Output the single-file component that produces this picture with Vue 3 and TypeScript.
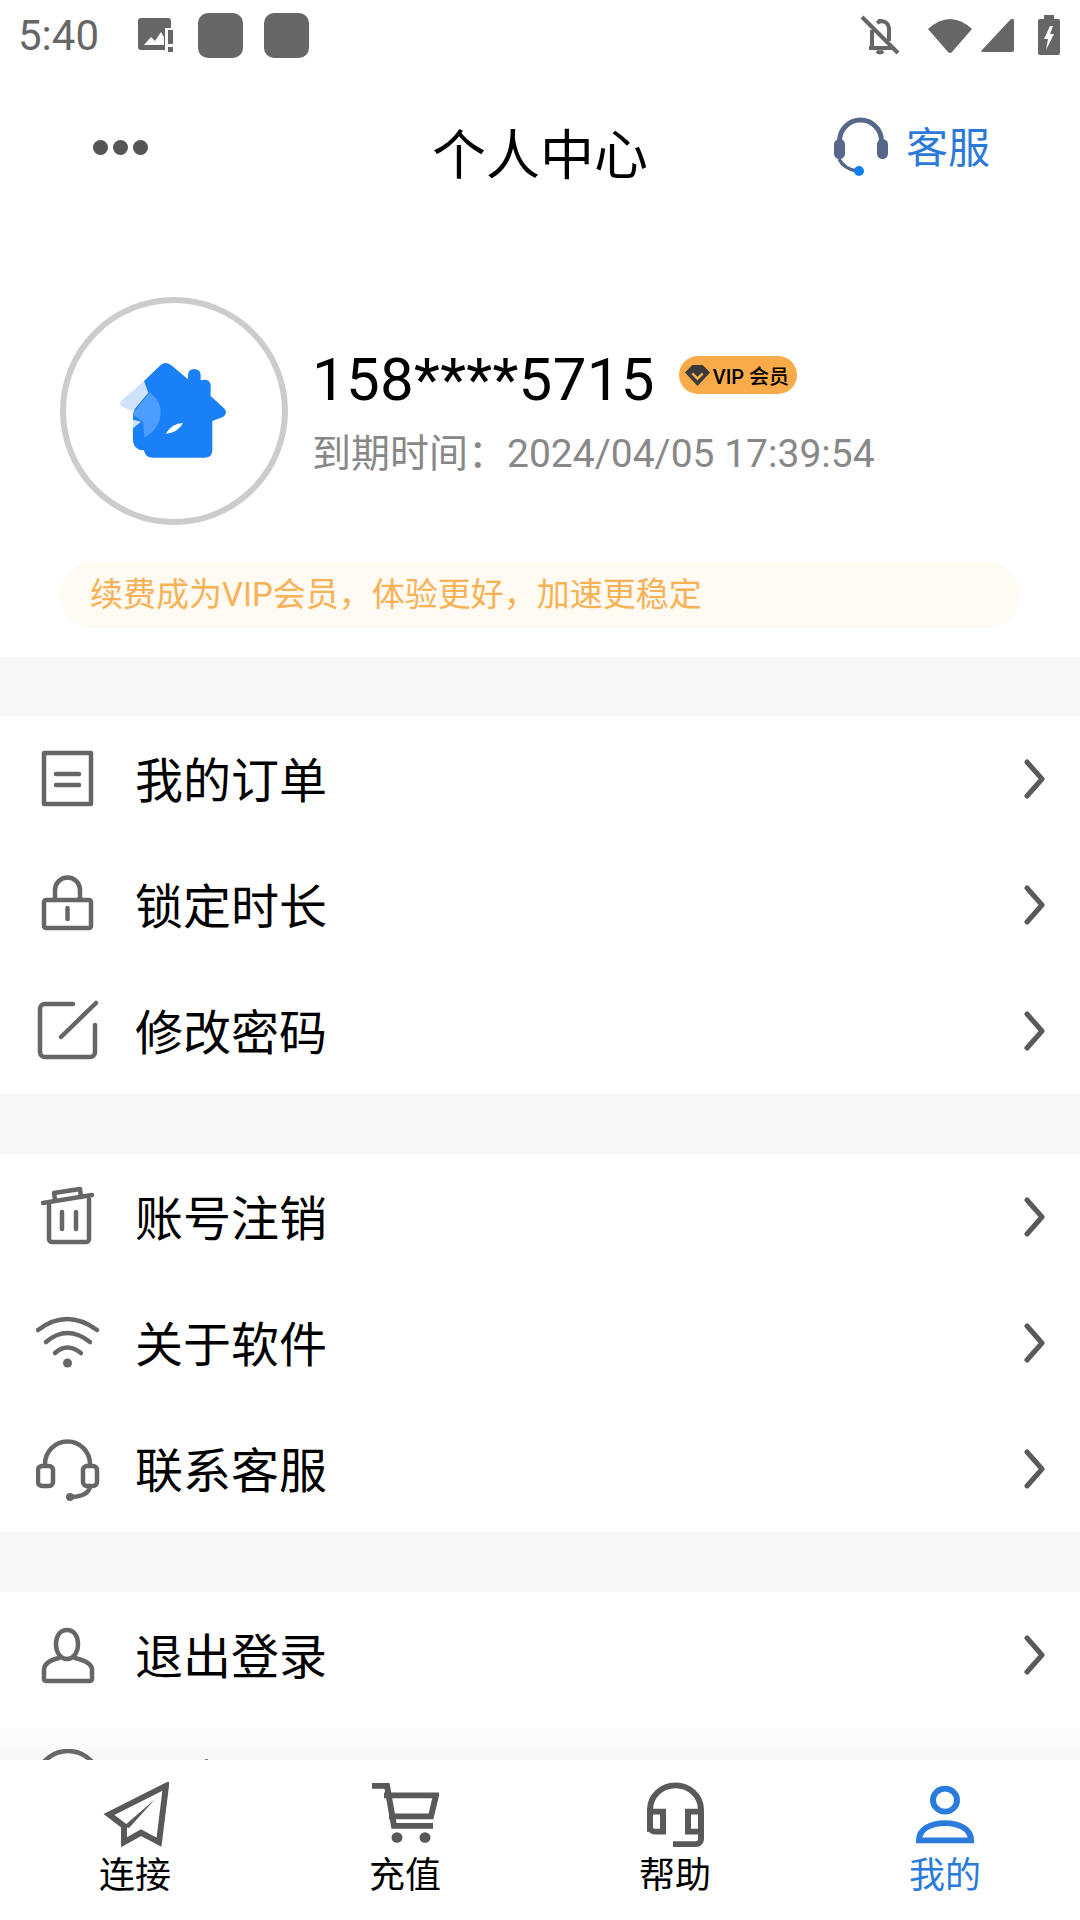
<script setup lang="ts">
interface MenuItem {
  label: string
  paths: string[]
  dot?: [number, number, number]
}

interface TabItem {
  label: string
  active?: boolean
}

const groups: MenuItem[][] = [
  [
    {
      label: '我的订单',
      paths: ['M8 6H55V57H8Z', 'M20 27H43', 'M20 38H43'],
    },
    {
      label: '锁定时长',
      paths: ['M10 27H53a2 2 0 0 1 2 2V53a2 2 0 0 1-2 2H10a2 2 0 0 1-2-2V29a2 2 0 0 1 2-2Z', 'M19 27V17a12.5 12.5 0 0 1 25 0V27', 'M31.5 35V46'],
    },
    {
      label: '修改密码',
      paths: ['M37 5H9a5 5 0 0 0-5 5V53a5 5 0 0 0 5 5H54a5 5 0 0 0 5-5V26', 'M60 4L25 38'],
    },
  ],
  [
    {
      label: '账号注销',
      paths: ['M7 18L56 10', 'M19 15L18 8L44 4L45 12', 'M13 20V54a3 3 0 0 0 3 3H50a3 3 0 0 0 3-3V14', 'M26 27V44', 'M40 27V44'],
    },
    {
      label: '关于软件',
      paths: ['M2 19Q31 -3 61 19', 'M10 31Q31 13 54 31', 'M19 42Q31 31 45 42'],
      dot: [31.5, 52, 4.5],
    },
    {
      label: '联系客服',
      paths: ['M9 27A22.5 22.5 0 0 1 54 27', 'M6 29H13a4 4 0 0 1 4 4V45a4 4 0 0 1-4 4H6a4 4 0 0 1-4-4V33a4 4 0 0 1 4-4Z', 'M51 29H57a4 4 0 0 1 4 4V45a4 4 0 0 1-4 4H51a4 4 0 0 1-4-4V33a4 4 0 0 1 4-4Z', 'M54 50Q52 59 36 60'],
      dot: [34, 60, 4],
    },
  ],
  [
    {
      label: '退出登录',
      paths: ['M31 7C24 7 20 13 20 21C20 30 25 36 31 36C37 36 42 30 42 21C42 13 38 7 31 7Z', 'M23 35C14 37 8 40 8 47V56a2 2 0 0 0 2 2H54a2 2 0 0 0 2-2V47C56 40 48 37 39 35'],
    },
  ],
]

const tabs: TabItem[] = [
  { label: '连接' },
  { label: '充值' },
  { label: '帮助' },
  { label: '我的', active: true },
]
</script>

<template>
  <div class="page">
    <div class="status-bar">
      <span class="clock">5:40</span>
      <svg class="st-photo" width="36" height="36" viewBox="0 0 36 36">
        <path d="M3 1H30a3 3 0 0 1 3 3V11H27V33H3a3 3 0 0 1-3-3V4a3 3 0 0 1 3-3Z" fill="#666" />
        <path d="M6 28L13 20L17 24L23 15L26 20V28Z" fill="#fff" />
        <path d="M30 13H35V27H30ZM30 30H35V35H30Z" fill="#666" />
      </svg>
      <span class="st-square"></span>
      <span class="st-square"></span>
      <span class="st-gap"></span>
      <svg width="40" height="40" viewBox="0 0 40 40" fill="none" stroke="#666" stroke-width="4">
        <path d="M2 2L38 38" />
        <path d="M9 33H34M12 32V15M17 8Q21 5 25 7Q29 9 29 15V26" />
        <path d="M20 4V7M17 36Q20 39 23 36" />
      </svg>
      <svg class="st-wifi" width="46" height="38" viewBox="0 0 46 38">
        <path d="M1 13Q23 -7 45 13L25 36Q23 38 21 36Z" fill="#666" />
      </svg>
      <svg class="st-signal" width="34" height="34" viewBox="0 0 34 34">
        <path d="M34 3V32a2 2 0 0 1-2 2H3Q0 34 2 32L30 2Q34 -1 34 3Z" fill="#666" />
      </svg>
      <svg class="st-battery" width="22" height="40" viewBox="0 0 22 40">
        <path d="M6 0H16V4H20a2 2 0 0 1 2 2V38a2 2 0 0 1-2 2H2a2 2 0 0 1-2-2V6a2 2 0 0 1 2-2H6Z" fill="#666" />
        <path d="M12 11L6 24H10L8 35L16 19H12L15 11Z" fill="#fff" />
      </svg>
    </div>

    <header class="top-bar">
      <div class="more">
        <i></i><i></i><i></i>
      </div>
      <h1 class="title">个人中心</h1>
      <div class="service">
        <svg width="60" height="60" viewBox="0 0 60 60" fill="none">
          <path d="M9.5 24a21 21 0 0 1 42 0" stroke="#566789" stroke-width="5" />
          <rect x="4" y="22" width="11" height="20" rx="5.5" fill="#566789" />
          <rect x="47" y="22" width="11" height="20" rx="5.5" fill="#566789" />
          <path d="M9 42Q14 52 27 54" stroke="#566789" stroke-width="3.5" />
          <circle cx="29" cy="54" r="5" fill="#0d7ff2" />
        </svg>
        <span class="service-text">客服</span>
      </div>
    </header>

    <section class="profile">
      <div class="user">
        <div class="avatar">
          <svg width="130" height="120" viewBox="0 0 390 360">
            <path d="M105 90L155 42Q170 30 186 42L237 85V72Q238 54 256 54Q276 56 275 74V88Q302 82 305 102V135L345 172Q358 186 342 198L310 210V298Q310 320 288 320H130Q108 320 105 298Q78 298 72 272V190Z" fill="#1a80f5" />
            <path d="M105 90L118 125L72 180L40 168Q26 156 40 146Z" fill="#cfe2fb" />
            <path d="M72 206L96 212L72 232Z" fill="#cfe2fb" />
            <path d="M122 124Q158 150 155 190Q150 236 106 260L102 212L70 190Z" fill="#4c9dff" />
            <path d="M170 248Q190 216 222 216Q206 246 170 248Z" fill="#fff" />
          </svg>
        </div>
        <div class="user-info">
          <div class="phone-line">
            <span class="phone">158****5715</span>
            <span class="vip-badge">
              <svg width="25" height="25" viewBox="0 0 24 24">
                <path d="M7 2H17L24 9L12 22L0 9Z" fill="#3a3a3a" />
                <path d="M7 10L12 15L17 10" fill="none" stroke="#f9ab4a" stroke-width="2.5" />
              </svg>
              <span>VIP 会员</span>
            </span>
          </div>
          <div class="expire">到期时间：2024/04/05 17:39:54</div>
        </div>
      </div>
      <div class="promo">续费成为VIP会员，体验更好，加速更稳定</div>
    </section>

    <main class="scroller">
      <div v-for="(group, i) in groups" :key="i" class="group">
        <div v-for="item in group" :key="item.label" class="row">
          <svg class="row-icon" width="64" height="64" viewBox="0 0 64 64" fill="none" stroke="#666" stroke-width="4.5" stroke-linecap="round" stroke-linejoin="round">
            <path v-for="d in item.paths" :key="d" :d="d" />
            <circle v-if="item.dot" :cx="item.dot[0]" :cy="item.dot[1]" :r="item.dot[2]" fill="#666" stroke="none" />
          </svg>
          <span class="row-label">{{ item.label }}</span>
          <svg class="chevron" width="24" height="40" viewBox="0 0 24 40" fill="none" stroke="#5a5a5a" stroke-width="5" stroke-linecap="round" stroke-linejoin="round">
            <path d="M5 3L20 20L5 37" />
          </svg>
        </div>
      </div>
      <div class="row row-fade">
        <svg class="row-icon" width="64" height="64" viewBox="0 0 64 64" fill="none" stroke="#666" stroke-width="4.5">
          <circle cx="32" cy="34" r="32" />
        </svg>
        <span class="row-label">分享</span>
      </div>
    </main>

    <nav class="tab-bar">
      <div v-for="(tab, i) in tabs" :key="tab.label" class="tab" :class="{ active: tab.active }">
        <svg width="68" height="65" viewBox="0 0 68 68" preserveAspectRatio="none" fill="none" stroke="#595959" stroke-width="6">
          <template v-if="i === 0">
            <path d="M65 4L8 34L23 46V63L40 53L58 63Z" stroke-width="6" />
            <path d="M23 46L54 18L28 48Z" fill="#595959" stroke="none" />
          </template>
          <template v-else-if="i === 1">
            <path d="M1 4H16L23 46H62" />
            <path d="M13 14H65L60 36H18" />
            <circle cx="26" cy="58" r="5.5" fill="#595959" stroke="none" />
            <circle cx="54" cy="58" r="5.5" fill="#595959" stroke="none" />
          </template>
          <template v-else-if="i === 2">
            <path d="M9 52V29a25.5 25.5 0 0 1 51 0V60a5 5 0 0 1-5 5H32" />
            <path d="M9 31H22V52H14a5 5 0 0 1-5-5" />
            <path d="M60 31H47V52H60" />
          </template>
          <template v-else>
            <circle cx="34" cy="19" r="12" stroke="#2a7bdc" />
            <path d="M8 61C8 49 20 43 34 43C48 43 60 49 60 61Z" stroke="#2a7bdc" />
          </template>
        </svg>
        <span class="tab-label">{{ tab.label }}</span>
      </div>
    </nav>
  </div>
</template>

<style>
html,
body {
  margin: 0;
  background: #fff;
}
</style>

<style scoped>
.page {
  display: flex;
  flex-direction: column;
  width: 1080px;
  height: 1920px;
  overflow: hidden;
  background: #fff;
  color: #000;
  font-family: Roboto, "Noto Sans CJK SC", sans-serif;
}

.status-bar {
  display: flex;
  align-items: center;
  flex: none;
  height: 70px;
  padding: 0 20px 0 18px;
  box-sizing: border-box;
}

.clock {
  width: 120px;
  font-size: 42px;
  color: #666;
}

.st-photo {
  margin-right: 24px;
}

.st-square {
  width: 45px;
  height: 45px;
  margin-right: 21px;
  border-radius: 10px;
  background: #666;
}

.st-gap {
  flex: 1;
}

.st-wifi {
  margin-left: 27px;
}

.st-signal {
  margin-left: 7px;
}

.st-battery {
  margin-left: 24px;
}

.top-bar {
  display: flex;
  align-items: center;
  justify-content: space-between;
  position: relative;
  flex: none;
  height: 154px;
  padding: 0 90px 0 93px;
}

.more {
  display: flex;
  gap: 5px;
}

.more i {
  width: 15px;
  height: 15px;
  border-radius: 50%;
  background: #555;
}

.title {
  position: absolute;
  left: 0;
  right: 0;
  top: 52px;
  margin: 0;
  text-align: center;
  font-size: 54px;
  font-weight: 400;
  line-height: 70px;
}

.service {
  display: flex;
  align-items: center;
  gap: 16px;
  color: #2b7ad9;
  font-size: 42px;
}

.service-text {
  margin-bottom: 5px;
}

.profile {
  flex: none;
  padding: 73px 60px 29px;
}

.user {
  display: flex;
  align-items: center;
  gap: 24px;
}

.avatar {
  display: flex;
  align-items: center;
  justify-content: center;
  width: 228px;
  height: 228px;
  box-sizing: border-box;
  border: 6px solid #ccc;
  border-radius: 50%;
}

.user-info {
  display: flex;
  flex-direction: column;
  gap: 16px;
}

.phone-line {
  display: flex;
  align-items: center;
  gap: 24px;
}

.phone {
  font-size: 60px;
  line-height: 70px;
  letter-spacing: 0.3px;
}

.vip-badge {
  display: flex;
  align-items: center;
  gap: 3px;
  height: 38px;
  padding: 0 8px 0 6px;
  margin-bottom: 10px;
  border-radius: 19px;
  background: #f9ab4a;
  font-size: 20px;
  font-weight: 500;
}

.expire {
  font-size: 39px;
  line-height: 46px;
  color: #888;
}

.promo {
  height: 66px;
  margin-top: 37px;
  padding-left: 30px;
  border-radius: 33px;
  background: #fffaf2;
  color: #f9b155;
  font-size: 33px;
  line-height: 66px;
}

.scroller {
  flex: 1;
  min-height: 0;
  overflow: hidden;
  display: flex;
  flex-direction: column;
}

.group {
  flex: none;
  padding-top: 59px;
  background: #f7f7f7;
}

.group + .group {
  padding-top: 60px;
}

.row {
  display: flex;
  align-items: center;
  flex: none;
  height: 126px;
  padding: 0 36px;
  background: #fff;
}

.row-fade {
  background: linear-gradient(#fff 5px, #f7f7f7 41px);
}

.row-label {
  margin-left: 35px;
  margin-bottom: 4px;
  font-size: 48px;
}

.chevron {
  margin-left: auto;
  margin-right: -2px;
}

.tab-bar {
  display: grid;
  grid-template-columns: repeat(4, 1fr);
  flex: none;
  height: 160px;
  padding-top: 22px;
  box-sizing: border-box;
  background: #fff;
}

.tab {
  display: flex;
  flex-direction: column;
  align-items: center;
}

.tab-label {
  margin-top: 7px;
  font-size: 36px;
  line-height: 44px;
}

.tab.active .tab-label {
  color: #2a7bdc;
}
</style>
